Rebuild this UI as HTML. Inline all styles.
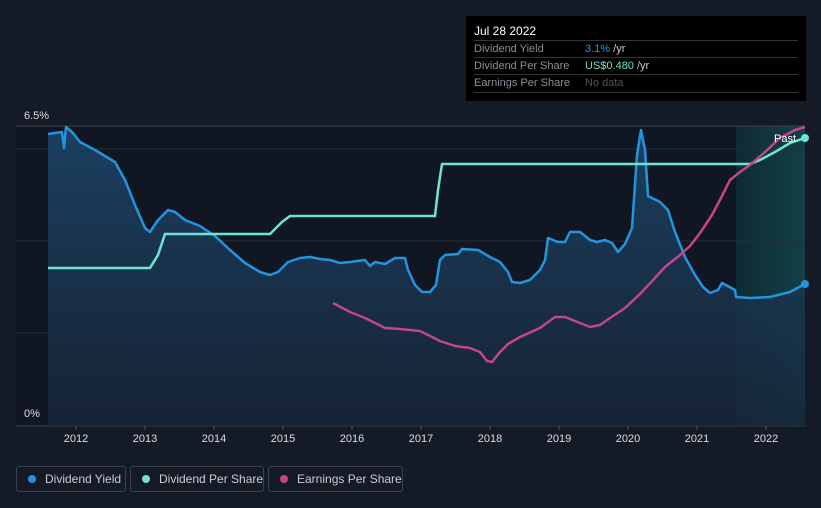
<!DOCTYPE html><html><head><style>
html,body{margin:0;width:821px;height:508px;overflow:hidden}
body{background:#151b26;font-family:"Liberation Sans",sans-serif;position:relative}
.tt{position:absolute;left:466px;top:16px;width:340px;height:85px;background:#000}
.tt .h{position:absolute;left:8px;top:8px;color:#fff;font-size:12px}
.row{position:absolute;left:8px;width:324px;border-top:1px solid #333;font-size:11px;height:17px;line-height:17px;white-space:nowrap}
.row span{position:absolute;left:111px}
.lg{position:absolute;top:466px;height:26px;border:1px solid #3a404b;border-radius:3px;color:#ccc;font-size:12px;line-height:24px;box-sizing:border-box;white-space:nowrap}
.lg i{position:absolute;left:11px;top:8px;width:8px;height:8px;border-radius:50%}
.lg b{font-weight:normal;position:absolute;left:28px;white-space:nowrap}
.yr{position:absolute;top:433px;color:#ddd;font-size:11px;width:40px;text-align:center}
</style></head><body>
<svg width="821" height="508" style="position:absolute;left:0;top:0">
<defs><linearGradient id="f" x1="0" y1="0" x2="0" y2="1"><stop offset="0" stop-color="#1d4468" stop-opacity=".9"/><stop offset="1" stop-color="#172638" stop-opacity=".8"/></linearGradient>
<linearGradient id="fc" x1="0" x2="1"><stop offset="0" stop-color="#0f2a33"/><stop offset="1" stop-color="#134048"/></linearGradient></defs>
<rect x="16" y="126" width="789" height="300" fill="#111722"/>
<rect x="736" y="126" width="69" height="300" fill="url(#fc)"/>
<line x1="16" y1="126" x2="805" y2="126" stroke="#3a404b"/>
<line x1="16" y1="149" x2="805" y2="149" stroke="#262c37"/>
<line x1="16" y1="241" x2="805" y2="241" stroke="#262c37"/>
<line x1="16" y1="333" x2="805" y2="333" stroke="#262c37"/>
<line x1="16" y1="426" x2="805" y2="426" stroke="#3a404b"/>
<path d="M48,134 L62,132 L64,148 L66,127 L72,132 L80,142 L95,150 L115,162 L125,180 L135,205 L145,228 L150,232 L158,220 L168,210 L175,212 L185,220 L200,226 L215,236 L230,250 L245,263 L260,272 L270,275 L278,272 L288,262 L300,258 L310,257 L320,259 L330,260 L340,263 L350,262 L365,260 L370,266 L375,262 L385,264 L395,258 L405,258 L408,270 L415,285 L422,292 L430,292 L436,285 L440,260 L445,255 L458,254 L462,249 L478,250 L490,257 L500,262 L508,272 L512,282 L520,283 L530,280 L540,270 L545,260 L548,238 L558,242 L565,242 L570,232 L580,232 L590,240 L597,242 L605,240 L612,243 L618,252 L625,244 L632,228 L637,155 L641,130 L645,150 L648,196 L660,202 L668,210 L675,232 L685,257 L695,275 L703,287 L710,293 L718,290 L722,283 L735,290 L736,297 L750,298 L770,297 L790,292 L805,284 L805,426 L48,426Z" fill="url(#f)"/>
<path d="M48,134 L62,132 L64,148 L66,127 L72,132 L80,142 L95,150 L115,162 L125,180 L135,205 L145,228 L150,232 L158,220 L168,210 L175,212 L185,220 L200,226 L215,236 L230,250 L245,263 L260,272 L270,275 L278,272 L288,262 L300,258 L310,257 L320,259 L330,260 L340,263 L350,262 L365,260 L370,266 L375,262 L385,264 L395,258 L405,258 L408,270 L415,285 L422,292 L430,292 L436,285 L440,260 L445,255 L458,254 L462,249 L478,250 L490,257 L500,262 L508,272 L512,282 L520,283 L530,280 L540,270 L545,260 L548,238 L558,242 L565,242 L570,232 L580,232 L590,240 L597,242 L605,240 L612,243 L618,252 L625,244 L632,228 L637,155 L641,130 L645,150 L648,196 L660,202 L668,210 L675,232 L685,257 L695,275 L703,287 L710,293 L718,290 L722,283 L735,290 L736,297 L750,298 L770,297 L790,292 L805,284" fill="none" stroke="#2394e0" stroke-width="2.5" stroke-linejoin="round"/>
<path d="M48,268 L150,268 L158,255 L165,234 L270,234 L282,222 L290,216 L435,216 L438,190 L442,164 L750,164 L760,160 L775,152 L790,143 L805,138" fill="none" stroke="#6ee5d2" stroke-width="2.5"/>
<path d="M333,303 L350,312 L365,318 L375,323 L385,328 L400,329 L420,331 L430,336 L440,341 L455,346 L470,348 L480,352 L487,361 L492,362 L500,352 L508,344 L520,337 L540,328 L555,317 L565,317 L580,323 L590,327 L600,325 L610,318 L625,308 L640,294 L655,278 L665,267 L680,255 L690,246 L700,233 L712,215 L722,196 L730,180 L740,172 L750,165 L765,152 L780,138 L795,130 L805,127" fill="none" stroke="#c3468a" stroke-width="2.5" stroke-linejoin="round"/>
<circle cx="805" cy="138" r="4" fill="#6ee5d2"/><circle cx="805" cy="284" r="4" fill="#2394e0"/>
<g stroke="#555" ><line x1="76" y1="426" x2="76" y2="430"/><line x1="145" y1="426" x2="145" y2="430"/><line x1="214" y1="426" x2="214" y2="430"/><line x1="283" y1="426" x2="283" y2="430"/><line x1="352" y1="426" x2="352" y2="430"/><line x1="421" y1="426" x2="421" y2="430"/><line x1="490" y1="426" x2="490" y2="430"/><line x1="559" y1="426" x2="559" y2="430"/><line x1="628" y1="426" x2="628" y2="430"/><line x1="697" y1="426" x2="697" y2="430"/><line x1="766" y1="426" x2="766" y2="430"/></g>
<text x="24" y="119" fill="#ddd" font-size="11" font-family="Liberation Sans">6.5%</text>
<text x="24" y="417" fill="#ddd" font-size="11" font-family="Liberation Sans">0%</text>
<text x="774" y="142" fill="#fff" font-size="11" font-family="Liberation Sans">Past</text>
</svg>
<div class="yr" style="left:56px">2012</div><div class="yr" style="left:125px">2013</div><div class="yr" style="left:194px">2014</div><div class="yr" style="left:263px">2015</div><div class="yr" style="left:332px">2016</div><div class="yr" style="left:401px">2017</div><div class="yr" style="left:470px">2018</div><div class="yr" style="left:539px">2019</div><div class="yr" style="left:608px">2020</div><div class="yr" style="left:677px">2021</div><div class="yr" style="left:746px">2022</div>
<div class="tt"><div class="h">Jul 28 2022</div>
<div class="row" style="top:24px;color:#8a8f99">Dividend Yield<span><em style="font-style:normal;color:#2394e0">3.1%</em> <em style="font-style:normal;color:#ccc">/yr</em></span></div>
<div class="row" style="top:41px;color:#8a8f99">Dividend Per Share<span><em style="font-style:normal;color:#6ee5d2">US$0.480</em> <em style="font-style:normal;color:#ccc">/yr</em></span></div>
<div class="row" style="top:58px;color:#8a8f99;border-bottom:1px solid #333">Earnings Per Share<span style="color:#555">No data</span></div></div>
<div class="lg" style="left:16px;width:110px"><i style="background:#2394e0"></i><b>Dividend Yield</b></div>
<div class="lg" style="left:130px;width:134px"><i style="background:#6ee5d2"></i><b>Dividend Per Share</b></div>
<div class="lg" style="left:268px;width:135px"><i style="background:#c3468a"></i><b>Earnings Per Share</b></div>
</body></html>
